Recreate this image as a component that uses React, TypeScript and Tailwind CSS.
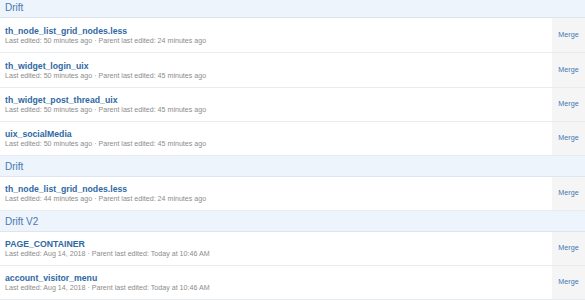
import React from "react";

type Item = { name: string; sub: string };
type Group = { title: string; items: Item[] };

const groups: Group[] = [
  {
    title: "Drift",
    items: [
      { name: "th_node_list_grid_nodes.less", sub: "Last edited: 50 minutes ago · Parent last edited: 24 minutes ago" },
      { name: "th_widget_login_uix", sub: "Last edited: 50 minutes ago · Parent last edited: 45 minutes ago" },
      { name: "th_widget_post_thread_uix", sub: "Last edited: 50 minutes ago · Parent last edited: 45 minutes ago" },
      { name: "uix_socialMedia", sub: "Last edited: 50 minutes ago · Parent last edited: 45 minutes ago" },
    ],
  },
  {
    title: "Drift",
    items: [
      { name: "th_node_list_grid_nodes.less", sub: "Last edited: 44 minutes ago · Parent last edited: 24 minutes ago" },
    ],
  },
  {
    title: "Drift V2",
    items: [
      { name: "PAGE_CONTAINER", sub: "Last edited: Aug 14, 2018 · Parent last edited: Today at 10:46 AM" },
      { name: "account_visitor_menu", sub: "Last edited: Aug 14, 2018 · Parent last edited: Today at 10:46 AM" },
    ],
  },
];

export default function App() {
  return (
    <div
      className="w-[585px] h-[300px] overflow-hidden bg-white"
      style={{ fontFamily: '"Liberation Sans", Arial, sans-serif' }}
    >
      <div className="-mt-[3px]">
        {groups.map((g, gi) => (
          <div key={gi}>
            <div className="h-[21px] flex items-center px-[5px] bg-[#edf4fc] border-b border-[#dde6f0] text-[10px] text-[#4a79ae]">
              {g.title}
            </div>
            {g.items.map((it, ii) => (
              <div
                key={ii}
                className={`flex border-b border-[#e9ecef] ${gi === 0 && ii < 2 ? "h-[35px]" : "h-[34px]"}`}
              >
                <div className="flex-1 flex flex-col justify-center px-[5px] pt-[1px]">
                  <div className="text-[8.7px] leading-[11px] font-bold text-[#2e68a3]">{it.name}</div>
                  <div className="text-[7.1px] leading-[9px] text-[#8c8c8c]">{it.sub}</div>
                </div>
                <div className="w-[33px] bg-[#f5f5f5] flex items-center justify-center text-[7.2px] text-[#3f77b4]">
                  Merge
                </div>
              </div>
            ))}
          </div>
        ))}
      </div>
    </div>
  );
}
